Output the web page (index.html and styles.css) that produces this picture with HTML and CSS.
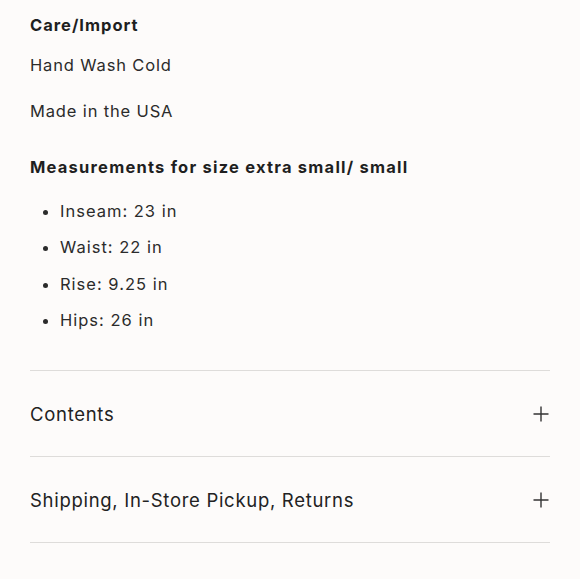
FILE: index.html
```html
<!DOCTYPE html>
<html lang="en">
<head>
<meta charset="utf-8">
<link rel="stylesheet" href="styles.css">
</head>
<body>
<div class="product-info">
  <div class="description">
    <p class="heading">Care/Import</p>
    <p class="line first">Hand Wash Cold</p>
    <p class="line second">Made in the USA</p>
    <p class="heading measure">Measurements for size extra small/ small</p>
    <ul class="bullets">
      <li>Inseam: 23 in</li>
      <li>Waist: 22 in</li>
      <li>Rise: 9.25 in</li>
      <li>Hips: 26 in</li>
    </ul>
  </div>
  <div class="accordion">
    <div class="acc-row">
      <span class="acc-title">Contents</span>
      <svg class="plus" viewBox="0 0 16 16" width="16" height="16"><path d="M8 0.5V15.5M0.5 8H15.5" stroke="#333" stroke-width="1.4" fill="none"/></svg>
    </div>
    <div class="acc-row">
      <span class="acc-title">Shipping, In-Store Pickup, Returns</span>
      <svg class="plus" viewBox="0 0 16 16" width="16" height="16"><path d="M8 0.5V15.5M0.5 8H15.5" stroke="#333" stroke-width="1.4" fill="none"/></svg>
    </div>
  </div>
</div>
</body>
</html>
```
FILE: styles.css
```css
html, body {
  margin: 0;
  padding: 0;
  background: #fdfbfa;
}
body {
  font-family: Inter, "Noto Sans", sans-serif;
  color: #2b2b2b;
}
.product-info {
  width: 520px;
  padding: 13px 0 0 30px;
}
.description p {
  margin: 0;
  font-size: 16.5px;
  line-height: 24px;
  letter-spacing: 0.85px;
}
.description p.heading {
  font-weight: 700;
  color: #1f1f1f;
  letter-spacing: 1px;
}
.description p.heading.measure {
  margin-top: 32px;
  letter-spacing: 1.22px;
}
.line.first { margin-top: 16px; }
.line.second { margin-top: 22px; }
.bullets {
  margin: 20px 0 0 0;
  padding: 0 0 0 30px;
  display: flex;
  flex-direction: column;
  gap: 12.4px;
}
.bullets li {
  font-size: 16.5px;
  line-height: 24px;
  letter-spacing: 1px;
}
.accordion {
  margin-top: 38px;
  border-top: 1px solid #dedcda;
}
.acc-row {
  height: 85px;
  border-bottom: 1px solid #dedcda;
  display: flex;
  align-items: center;
  justify-content: space-between;
}
.acc-title {
  font-size: 18.5px;
  letter-spacing: 0.7px;
  color: #222;
}
.plus {
  margin-right: 1px;
  display: block;
}
```
